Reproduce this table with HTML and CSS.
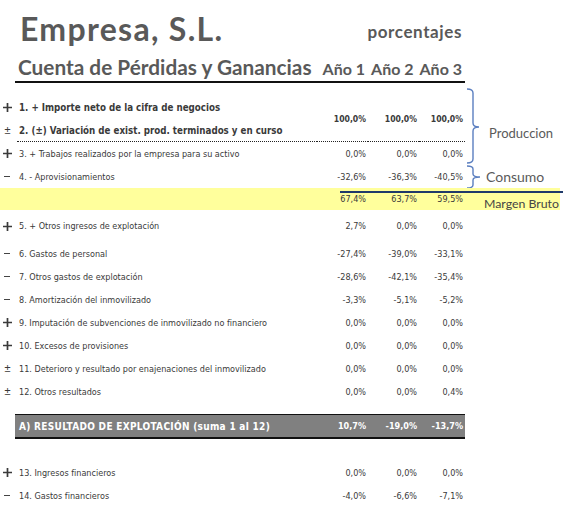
FILE: index.html
```html
<!DOCTYPE html>
<html lang="es">
<head>
<meta charset="utf-8">
<title>Empresa, S.L. - Cuenta de Pérdidas y Ganancias</title>
<link rel="stylesheet" href="styles.css">
</head>
<body>
<div class="page">
  <header class="head">
    <div class="title-row">
      <h1 class="title">Empresa, S.L.</h1>
      <span class="unit">porcentajes</span>
    </div>
    <div class="sub-row">
      <h2 class="subtitle">Cuenta de Pérdidas y Ganancias</h2>
      <div class="years"><span>Año 1</span><span>Año 2</span><span>Año 3</span></div>
    </div>
  </header>

  <div class="sheet">
    <svg class="braces" width="24" height="104" viewBox="0 0 24 104">
      <path d="M1 1 Q7 1 7 5 L7 35 Q7 39 13 39 Q7 39 7 43 L7 71 Q7 75 1 75" fill="none" stroke="#5b7fc0" stroke-width="1.4"/>
      <path d="M1 78 Q7 78 7 81 L7 86 Q7 89 14 89 Q7 89 7 92 L7 97 Q7 100 1 100" fill="none" stroke="#5b7fc0" stroke-width="1.4"/>
    </svg>

    <div class="group2">
      <span class="ic r1"><svg width="9" height="9" viewBox="0 0 9 9"><path d="M0 4.5H9M4.5 0V9" stroke="#3a3a3a" stroke-width="1.7"/></svg></span>
      <span class="lbl b r1">1. + Importe neto de la cifra de negocios</span>
      <span class="ic r2"><span class="pm">±</span></span>
      <span class="lbl b r2 dots">2. (±) Variación de exist. prod. terminados y en curso</span>
      <span class="v b span2 dots">100,0%</span>
      <span class="v b span2 dots">100,0%</span>
      <span class="v b span2 dots">100,0%</span>
      <span class="note r2 prod">Produccion</span>
    </div>

    <div class="row">
      <span class="ic"><svg width="9" height="9" viewBox="0 0 9 9"><path d="M0 4.5H9M4.5 0V9" stroke="#3a3a3a" stroke-width="1.7"/></svg></span>
      <span class="lbl">3. + Trabajos realizados por la empresa para su activo</span>
      <span class="v">0,0%</span><span class="v">0,0%</span><span class="v">0,0%</span>
    </div>
    <div class="row">
      <span class="ic"><span class="mn"></span></span>
      <span class="lbl">4. - Aprovisionamientos</span>
      <span class="v">-32,6%</span><span class="v">-36,3%</span><span class="v">-40,5%</span>
      <span class="note cons">Consumo</span>
    </div>
    <div class="row yellow">
      <span class="ic"></span><span class="lbl"></span>
      <span class="v">67,4%</span><span class="v">63,7%</span><span class="v">59,5%</span>
      <span class="note mb">Margen Bruto</span>
      <span class="mb-line"></span>
    </div>
    <div class="row tall">
      <span class="ic"><svg width="9" height="9" viewBox="0 0 9 9"><path d="M0 4.5H9M4.5 0V9" stroke="#3a3a3a" stroke-width="1.7"/></svg></span>
      <span class="lbl">5. + Otros ingresos de explotación</span>
      <span class="v">2,7%</span><span class="v">0,0%</span><span class="v">0,0%</span>
    </div>
    <div class="row">
      <span class="ic"><span class="mn"></span></span>
      <span class="lbl">6. Gastos de personal</span>
      <span class="v">-27,4%</span><span class="v">-39,0%</span><span class="v">-33,1%</span>
    </div>
    <div class="row">
      <span class="ic"><span class="mn"></span></span>
      <span class="lbl">7. Otros gastos de explotación</span>
      <span class="v">-28,6%</span><span class="v">-42,1%</span><span class="v">-35,4%</span>
    </div>
    <div class="row">
      <span class="ic"><span class="mn"></span></span>
      <span class="lbl">8. Amortización del inmovilizado</span>
      <span class="v">-3,3%</span><span class="v">-5,1%</span><span class="v">-5,2%</span>
    </div>
    <div class="row">
      <span class="ic"><svg width="9" height="9" viewBox="0 0 9 9"><path d="M0 4.5H9M4.5 0V9" stroke="#3a3a3a" stroke-width="1.7"/></svg></span>
      <span class="lbl">9. Imputación de subvenciones de inmovilizado no financiero</span>
      <span class="v">0,0%</span><span class="v">0,0%</span><span class="v">0,0%</span>
    </div>
    <div class="row">
      <span class="ic"><svg width="9" height="9" viewBox="0 0 9 9"><path d="M0 4.5H9M4.5 0V9" stroke="#3a3a3a" stroke-width="1.7"/></svg></span>
      <span class="lbl">10. Excesos de provisiones</span>
      <span class="v">0,0%</span><span class="v">0,0%</span><span class="v">0,0%</span>
    </div>
    <div class="row">
      <span class="ic"><span class="pm">±</span></span>
      <span class="lbl">11. Deterioro y resultado por enajenaciones del inmovilizado</span>
      <span class="v">0,0%</span><span class="v">0,0%</span><span class="v">0,0%</span>
    </div>
    <div class="row">
      <span class="ic"><span class="pm">±</span></span>
      <span class="lbl">12. Otros resultados</span>
      <span class="v">0,0%</span><span class="v">0,0%</span><span class="v">0,4%</span>
    </div>
    <div class="spacer s1"></div>
    <div class="row total">
      <span class="ic"></span>
      <span class="lbl">A) RESULTADO DE EXPLOTACIÓN (suma 1 al 12)</span>
      <span class="v">10,7%</span><span class="v">-19,0%</span><span class="v">-13,7%</span>
    </div>
    <div class="spacer s2"></div>
    <div class="row">
      <span class="ic"><svg width="9" height="9" viewBox="0 0 9 9"><path d="M0 4.5H9M4.5 0V9" stroke="#3a3a3a" stroke-width="1.7"/></svg></span>
      <span class="lbl">13. Ingresos financieros</span>
      <span class="v">0,0%</span><span class="v">0,0%</span><span class="v">0,0%</span>
    </div>
    <div class="row">
      <span class="ic"><span class="mn"></span></span>
      <span class="lbl">14. Gastos financieros</span>
      <span class="v">-4,0%</span><span class="v">-6,6%</span><span class="v">-7,1%</span>
    </div>
  </div>
</div>
</body>
</html>
```

FILE: styles.css
```css
* { box-sizing: border-box; }
html, body { margin: 0; padding: 0; background: #fff; }
body {
  width: 569px;
  height: 513px;
  overflow: hidden;
  font-family: "DejaVu Sans Condensed", "DejaVu Sans", sans-serif;
  color: #3a3a3a;
}
.page { width: 569px; }

/* header */
.head { width: 465px; color: #595959; font-family: Lato, "Open Sans", sans-serif; }
.title-row {
  display: flex;
  justify-content: space-between;
  align-items: baseline;
  height: 52px;
  padding: 9px 3px 0 20px;
}
.title { margin: 0; font-size: 32px; font-weight: 700; letter-spacing: 1.3px; line-height: 40px; }
.unit { font-size: 17px; font-weight: 700; letter-spacing: 0.6px; position: relative; top: -3px; }
.sub-row {
  display: flex;
  justify-content: space-between;
  align-items: baseline;
  margin-left: 15px;
  height: 31px;
  padding: 2px 3px 0 3px;
  border-bottom: 2px solid #111;
}
.subtitle { margin: 0; font-size: 20.8px; font-weight: 700; line-height: 26px; }
.years { display: flex; gap: 6px; font-size: 16px; font-weight: 700; }

/* sheet */
.sheet { position: relative; width: 560px; margin-top: 13px; }
.braces { position: absolute; left: 466px; top: -8px; }

.row, .group2 {
  display: grid;
  grid-template-columns: 15px 302px 51px 51px 46px 95px;
  align-items: center;
  font-size: 9px;
}
.row { height: 23px; }
.row.tall { height: 32px; }
.group2 { grid-template-rows: 23px 23px; }

.ic { grid-column: 1; display: flex; align-items: center; justify-content: center; height: 100%; }
.lbl { grid-column: 2; padding-left: 4px; white-space: nowrap; display: flex; align-items: center; height: 100%; }
.v { padding-right: 2px; display: flex; align-items: center; justify-content: flex-end; height: 100%; }
.b { font-weight: 700; }
.lbl.b { font-size: 9.7px; }
.v.b { font-size: 8.6px; }
.group2 .ic.r1, .group2 .ic.r2 { grid-column: 1; }
.group2 .lbl.r1, .group2 .lbl.r2 { grid-column: 2; }
.r1 { grid-row: 1; }
.r2 { grid-row: 2; }
.span2 { grid-row: 1 / 3; }
.dots { border-bottom: 1px dotted #222; }
.group2 .lbl.dots { margin-left: 2px; padding-left: 2px; }

.pm { font-family: "Liberation Sans", sans-serif; font-size: 11px; line-height: 1; color: #3a3a3a; }
.mn { display: block; width: 6px; height: 1px; background: #444; margin-right: 2px; }

.note { grid-column: 6; font-family: Lato, "Open Sans", sans-serif; font-size: 13px; color: #5a5a5a; padding-left: 24px; white-space: nowrap; }
.note.prod { grid-row: 2; align-self: end; line-height: 18px; }
.note.cons { padding-left: 21px; font-size: 14px; }
.yellow { background: #ffff9c; position: relative; height: 22px; }
.note.mb { padding-left: 19px; color: #454545; align-self: end; line-height: 13px; font-size: 12.3px; }
.mb-line { position: absolute; left: 340px; top: 3px; width: 223px; height: 2px; background: #1f3a6a; }

.spacer.s1 { height: 11px; }
.spacer.s2 { height: 22px; }

.total {
  width: 465px;
  height: 25px;
  grid-template-columns: 15px 302px 51px 51px 46px;
  font-weight: 700;
  font-size: 10px;
  color: #fff;
}
.total .lbl, .total .v { background: #808080; border-top: 1px solid #111; border-bottom: 2px solid #111; }
.total .lbl { padding-left: 4px; letter-spacing: 0.3px; }
.total .v { font-size: 9px; }
```
